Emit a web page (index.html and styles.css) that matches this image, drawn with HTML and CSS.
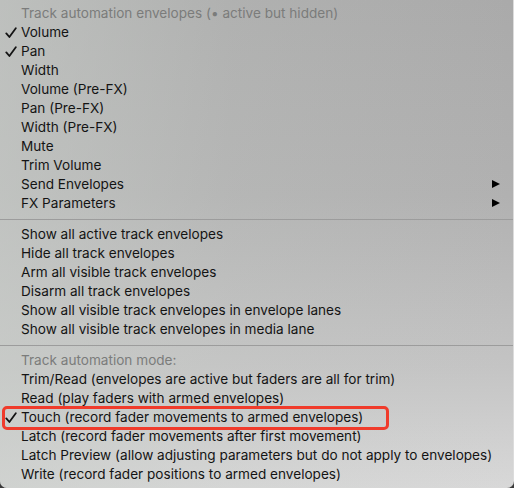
FILE: index.html
```html
<!DOCTYPE html>
<html>
<head>
<meta charset="utf-8">
<link rel="stylesheet" href="styles.css">
</head>
<body>
<div class="menu">
  <div class="row header">Track automation envelopes (• active but hidden)</div>
  <div class="row"><span class="check"><svg viewBox="0 0 12 12" width="12" height="12"><path d="M1.3 6.4 L4.4 10 L10.8 1.3" /></svg></span>Volume</div>
  <div class="row"><span class="check"><svg viewBox="0 0 12 12" width="12" height="12"><path d="M1.3 6.4 L4.4 10 L10.8 1.3" /></svg></span>Pan</div>
  <div class="row">Width</div>
  <div class="row">Volume (Pre-FX)</div>
  <div class="row">Pan (Pre-FX)</div>
  <div class="row">Width (Pre-FX)</div>
  <div class="row">Mute</div>
  <div class="row">Trim Volume</div>
  <div class="row sub">Send Envelopes<span class="arrow"></span></div>
  <div class="row sub">FX Parameters<span class="arrow"></span></div>
  <div class="sep"></div>
  <div class="row">Show all active track envelopes</div>
  <div class="row">Hide all track envelopes</div>
  <div class="row">Arm all visible track envelopes</div>
  <div class="row">Disarm all track envelopes</div>
  <div class="row">Show all visible track envelopes in envelope lanes</div>
  <div class="row">Show all visible track envelopes in media lane</div>
  <div class="sep"></div>
  <div class="row header">Track automation mode:</div>
  <div class="row">Trim/Read (envelopes are active but faders are all for trim)</div>
  <div class="row">Read (play faders with armed envelopes)</div>
  <div class="row highlight"><span class="check"><svg viewBox="0 0 12 12" width="12" height="12"><path d="M1.3 6.4 L4.4 10 L10.8 1.3" /></svg></span>Touch (record fader movements to armed envelopes)<span class="mark"></span></div>
  <div class="row">Latch (record fader movements after first movement)</div>
  <div class="row">Latch Preview (allow adjusting parameters but do not apply to envelopes)</div>
  <div class="row">Write (record fader positions to armed envelopes)</div>
</div>
</body>
</html>
```

FILE: styles.css
```css
html, body {
  margin: 0;
  padding: 0;
  background: #3a3a3a;
}
.menu {
  width: 514px;
  height: 488px;
  box-sizing: border-box;
  padding-top: 4px;
  border-radius: 0 0 7px 7px;
  border-right: 1px solid #dcdcdc;
  background:
    linear-gradient(90deg, rgba(202,206,202,0.6) 0%, rgba(200,204,200,0.2) 45%, rgba(168,168,168,0) 100%),
    linear-gradient(180deg, #aaaaaa 0%, #b1b1b1 40%, #c4c4c4 75%, #d8d8d8 100%);
  font-family: Inter, "Liberation Sans", sans-serif;
  font-size: 13.6px;
  color: #141414;
  overflow: hidden;
}
.row {
  position: relative;
  height: 19px;
  line-height: 19px;
  padding-left: 21px;
  white-space: nowrap;
}
.header {
  color: #7b7c7b;
}
.check {
  position: absolute;
  left: 5px;
  top: 4px;
  width: 12px;
  height: 12px;
}
.check svg {
  display: block;
}
.check path {
  fill: none;
  stroke: #141414;
  stroke-width: 1.8;
  stroke-linecap: round;
  stroke-linejoin: round;
}
.arrow {
  position: absolute;
  right: 13px;
  top: 5px;
  width: 0;
  height: 0;
  border-top: 4.5px solid transparent;
  border-bottom: 4.5px solid transparent;
  border-left: 8px solid #000;
}
.sep {
  height: 12px;
  display: flex;
  align-items: center;
}
.sep::before {
  content: "";
  display: block;
  width: 100%;
  height: 1px;
  background: #9c9c9c;
}
.highlight .mark {
  position: absolute;
  left: 2px;
  top: -2px;
  width: 381px;
  height: 18px;
  border: 3px solid #f03b2b;
  border-radius: 5px;
}
```
